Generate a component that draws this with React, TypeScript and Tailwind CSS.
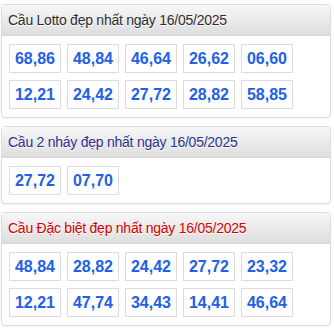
import React from 'react';

interface PanelProps {
  title: string;
  titleColor: string;
  numbers: string[];
}

function Panel({ title, titleColor, numbers }: PanelProps) {
  return (
    <div className="border border-[#dcdcdc] rounded-[4px] bg-white shadow-[0_1px_1px_rgba(0,0,0,0.05)] overflow-hidden">
      <div
        className={`h-[31px] flex items-center px-[6px] border-b border-[#d6d6d6] bg-gradient-to-b from-[#f7f7f7] to-[#dedede] text-[14px] tracking-[-0.25px] [text-shadow:0_1px_0_#fff] ${titleColor}`}
      >
        {title}
      </div>
      <div className="flex flex-wrap gap-x-[6px] gap-y-[7px] px-[7px] pt-[8px] pb-[8px]">
        {numbers.map((n, i) => (
          <div
            key={i}
            className="w-[52px] h-[29px] flex items-center justify-center border border-[#dcdcdc] bg-white text-[16px] font-bold text-[#2161e8]"
          >
            {n}
          </div>
        ))}
      </div>
    </div>
  );
}

export default function App() {
  return (
    <div
      className="w-[334px] h-[332px] bg-white pl-[1px] pr-[3px] pt-[4px] flex flex-col gap-[8px]"
      style={{ fontFamily: '"Liberation Sans", Arial, sans-serif' }}
    >
      <Panel
        title="Cầu Lotto đẹp nhất ngày 16/05/2025"
        titleColor="text-[#2e2e2e]"
        numbers={['68,86', '48,84', '46,64', '26,62', '06,60', '12,21', '24,42', '27,72', '28,82', '58,85']}
      />
      <Panel
        title="Cầu 2 nháy đẹp nhất ngày 16/05/2025"
        titleColor="text-[#2b2f8e]"
        numbers={['27,72', '07,70']}
      />
      <Panel
        title="Cầu Đặc biệt đẹp nhất ngày 16/05/2025"
        titleColor="text-[#d40000]"
        numbers={['48,84', '28,82', '24,42', '27,72', '23,32', '12,21', '47,74', '34,43', '14,41', '46,64']}
      />
    </div>
  );
}
